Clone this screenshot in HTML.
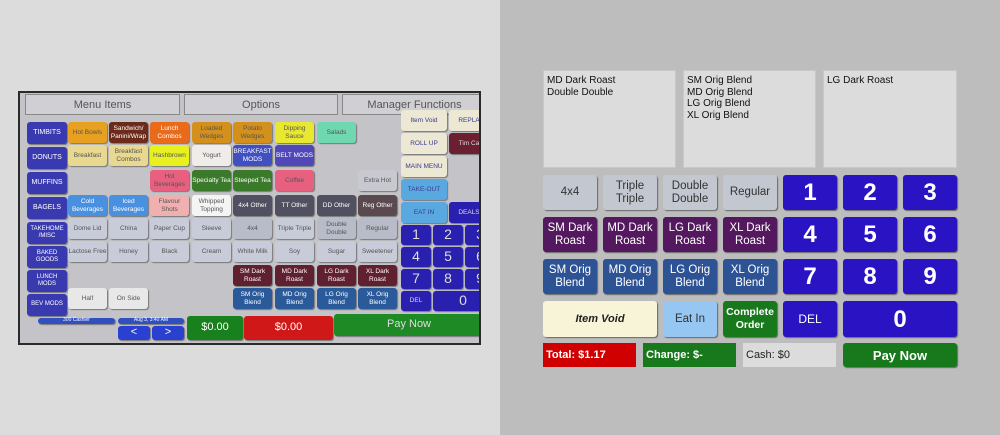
<!DOCTYPE html>
<html><head><style>
*{margin:0;padding:0;box-sizing:border-box}
body{width:1000px;height:435px;position:relative;overflow:hidden;font-family:"Liberation Sans",sans-serif;background:#dcdcdc}
#right{position:absolute;left:500px;top:0;width:500px;height:435px;background:#bdbdbd}
.box{position:absolute;background:#dcdcdc;border:1px solid #c8c8c8;font-size:10px;line-height:11.5px;padding:4px 3px;color:#111}
.b{position:absolute;display:flex;align-items:center;justify-content:center;text-align:center;border-radius:3px;font-size:11.5px;line-height:13px;color:#fff;box-shadow:1px 1px 1px rgba(0,0,0,.45)}
.g{background:#c3c7d0;color:#333}
.p{background:#54185e}
.bl{background:#2e5394}
.n{background:#2a13c2;font-size:24px;font-weight:bold}
.bar{position:absolute;top:343px;height:24px;font-size:11px;font-weight:bold;padding-left:3px;display:flex;align-items:center;color:#fff}
#photo{position:absolute;left:18px;top:91px;width:463px;height:254px;background:#c4c4c8;overflow:hidden;border:2px solid #2a2a2a}
.t{position:absolute;top:1px;height:21px;background:#d0d0d4;border:1px solid #888;color:#555;font-size:11px;display:flex;align-items:center;justify-content:center}
.c{position:absolute;display:flex;align-items:center;justify-content:center;text-align:center;border-radius:3px;font-size:6.5px;line-height:7.5px;color:#555;box-shadow:1px 1px 1px rgba(0,0,0,.4);width:39px;height:21px}
#clip{position:absolute;left:20px;top:93px;width:459px;height:250px;overflow:hidden}
#pc{position:absolute;left:-20px;top:-93px;width:1000px;height:435px}
</style></head><body>
<div id="photo">
<div class="t" style="left:5px;width:155px">Menu Items</div>
<div class="t" style="left:164px;width:154px">Options</div>
<div class="t" style="left:322px;width:145px">Manager Functions</div>
</div>
<div id="clip"><div id="pc"></div></div>
<div id="right"></div>
<div class="box" style="left:543px;top:70px;width:133px;height:98px">MD Dark Roast<br>Double Double</div>
<div class="box" style="left:683px;top:70px;width:133px;height:98px">SM Orig Blend<br>MD Orig Blend<br>LG Orig Blend<br>XL Orig Blend</div>
<div class="box" style="left:823px;top:70px;width:134px;height:98px">LG Dark Roast</div>

<div class="b g" style="left:543px;top:175px;width:54px;height:35px">4x4</div>
<div class="b g" style="left:603px;top:175px;width:54px;height:35px">Triple<br>Triple</div>
<div class="b g" style="left:663px;top:175px;width:54px;height:35px">Double<br>Double</div>
<div class="b g" style="left:723px;top:175px;width:54px;height:35px">Regular</div>
<div class="b n" style="left:783px;top:175px;width:54px;height:35px">1</div>
<div class="b n" style="left:843px;top:175px;width:54px;height:35px">2</div>
<div class="b n" style="left:903px;top:175px;width:54px;height:35px">3</div>

<div class="b p" style="left:543px;top:217px;width:54px;height:35px">SM Dark<br>Roast</div>
<div class="b p" style="left:603px;top:217px;width:54px;height:35px">MD Dark<br>Roast</div>
<div class="b p" style="left:663px;top:217px;width:54px;height:35px">LG Dark<br>Roast</div>
<div class="b p" style="left:723px;top:217px;width:54px;height:35px">XL Dark<br>Roast</div>
<div class="b n" style="left:783px;top:217px;width:54px;height:35px">4</div>
<div class="b n" style="left:843px;top:217px;width:54px;height:35px">5</div>
<div class="b n" style="left:903px;top:217px;width:54px;height:35px">6</div>

<div class="b bl" style="left:543px;top:259px;width:54px;height:35px">SM Orig<br>Blend</div>
<div class="b bl" style="left:603px;top:259px;width:54px;height:35px">MD Orig<br>Blend</div>
<div class="b bl" style="left:663px;top:259px;width:54px;height:35px">LG Orig<br>Blend</div>
<div class="b bl" style="left:723px;top:259px;width:54px;height:35px">XL Orig<br>Blend</div>
<div class="b n" style="left:783px;top:259px;width:54px;height:35px">7</div>
<div class="b n" style="left:843px;top:259px;width:54px;height:35px">8</div>
<div class="b n" style="left:903px;top:259px;width:54px;height:35px">9</div>

<div class="b" style="left:543px;top:301px;width:114px;height:36px;background:#f8f4d8;color:#222;font-style:italic;font-weight:bold;font-size:11px">Item Void</div>
<div class="b" style="left:663px;top:301px;width:54px;height:36px;background:#96c6f2;color:#333">Eat In</div>
<div class="b" style="left:723px;top:301px;width:54px;height:36px;background:#18781c;font-weight:bold;font-size:10.5px">Complete<br>Order</div>
<div class="b n" style="left:783px;top:301px;width:54px;height:36px;font-size:12px;font-weight:normal">DEL</div>
<div class="b n" style="left:843px;top:301px;width:114px;height:36px">0</div>

<div class="bar" style="left:543px;width:93px;background:#d00000">Total: $1.17</div>
<div class="bar" style="left:643px;width:93px;background:#18781c">Change: $-</div>
<div class="bar" style="left:743px;width:93px;background:#dcdcdc;color:#222;font-weight:normal">Cash: $0</div>
<div class="b" style="left:843px;top:343px;width:114px;height:24px;background:#18781c;font-weight:bold;font-size:13px">Pay Now</div>

<script>
var h='';
function c(x,y,w,hh,t,bg,col,fs){h+='<div class="c" style="left:'+x+'px;top:'+y+'px;width:'+w+'px;height:'+hh+'px;background:'+bg+';color:'+(col||'#555')+(fs?';font-size:'+fs+'px':'')+'">'+t+'</div>';}
var X=[68,109,150,192,233,275,317,358],Y=[122,145,170,195,218,241,265,288];
var cats=['TIMBITS','DONUTS','MUFFINS','BAGELS','TAKEHOME /MISC','BAKED GOODS','LUNCH MODS','BEV MODS'];
var cy=[122,147,172,197,222,246,270,294];
cats.forEach(function(t,i){c(27,cy[i],40,22,t,'#3a3ab0','#fff',i<4?7:6);});
var R=[
[['Hot Bowls','#e8a020'],['Sandwich/ Panini/Wrap','#6b2a1a','#fff'],['Lunch Combos','#e86a1a','#fff'],['Loaded Wedges','#d4901c'],['Potato Wedges','#d4901c'],['Dipping Sauce','#e8e830'],['Salads','#70d8b0']],
[['Breakfast','#e8d890'],['Breakfast Combos','#e8d890'],['Hashbrown','#e8f020'],['Yogurt','#f0ecea'],['BREAKFAST MODS','#4050c0','#fff'],['BELT MODS','#5048b8','#fff']],
[null,null,['Hot Beverages','#e86080'],['Specialty Tea','#3a7a2a','#fff'],['Steeped Tea','#3a7a2a','#fff'],['Coffee','#e86080'],null,['Extra Hot','#c8c8d0']],
[['Cold Beverages','#4a90e0','#fff'],['Iced Beverages','#4a90e0','#fff'],['Flavour Shots','#f0b0b0'],['Whipped Topping','#f4f4f4'],['4x4 Other','#505060','#fff'],['TT Other','#505060','#fff'],['DD Other','#505060','#fff'],['Reg Other','#5a4a50','#fff']],
[['Dome Lid','#c8ccd8'],['China','#c8ccd8'],['Paper Cup','#c8ccd8'],['Sleeve','#c8ccd8'],['4x4','#b8bcc8'],['Triple Triple','#c8ccd8'],['Double Double','#b8bcc8'],['Regular','#b8bcc8']],
[['Lactose Free','#c8ccd8'],['Honey','#c8ccd8'],['Black','#c8ccd8'],['Cream','#c8ccd8'],['White Milk','#c8ccd8'],['Soy','#c8ccd8'],['Sugar','#c8ccd8'],['Sweetener','#c8ccd8']],
[null,null,null,null,['SM Dark Roast','#602030','#fff'],['MD Dark Roast','#602030','#fff'],['LG Dark Roast','#602030','#fff'],['XL Dark Roast','#602030','#fff']],
[['Half','#e8e8e8'],['On Side','#e8e8e8'],null,null,['SM Orig Blend','#2a5a9a','#fff'],['MD Orig Blend','#2a5a9a','#fff'],['LG Orig Blend','#2a5a9a','#fff'],['XL Orig Blend','#2a5a9a','#fff']]];
R.forEach(function(r,i){r.forEach(function(e,j){if(e)c(X[j],Y[i],39,21,e[0],e[1],e[2]);});});
var rs=[['Item Void','#ece8d4','#3a3a90'],['ROLL UP','#ece8d4','#3a3a90'],['MAIN MENU','#ece8d4','#3a3a90'],['TAKE-OUT','#5aa8e0','#3a3a90'],['EAT IN','#5aa8e0','#3a3a90']];
rs.forEach(function(e,i){c(401,110+i*23,46,21,e[0],e[1],e[2]);});
c(449,110,40,21,'REPLA','#ece8d4','#3a3a90');c(449,133,40,21,'Tim Ca','#6a2030','#ddd');c(449,202,40,21,'DEALS','#2a20b0','#ddd');
var nx=[401,433,465];['1','2','3','4','5','6','7','8','9'].forEach(function(t,i){c(nx[i%3],225+Math.floor(i/3)*22,30,20,t,'#2a20b0','#ddd',14);});
c(401,291,30,20,'DEL','#2a20b0','#ddd');c(433,291,60,20,'0','#2a20b0','#ddd',14);
c(38,318,77,6,'300 Cashier','#3050c0','#fff',5);c(118,318,66,6,'Aug 3, 3:40 AM','#3050c0','#fff',5);
c(118,326,32,14,'&lt;','#2a40d0','#fff',11);c(152,326,32,14,'&gt;','#2a40d0','#fff',11);
c(187,316,56,24,'$0.00','#18801c','#fff',11);c(244,316,89,24,'$0.00','#d01818','#fff',11);
c(334,314,150,22,'Pay Now','#1e8a26','#ddd',11);
document.getElementById('pc').innerHTML=h;
</script>
</body></html>
